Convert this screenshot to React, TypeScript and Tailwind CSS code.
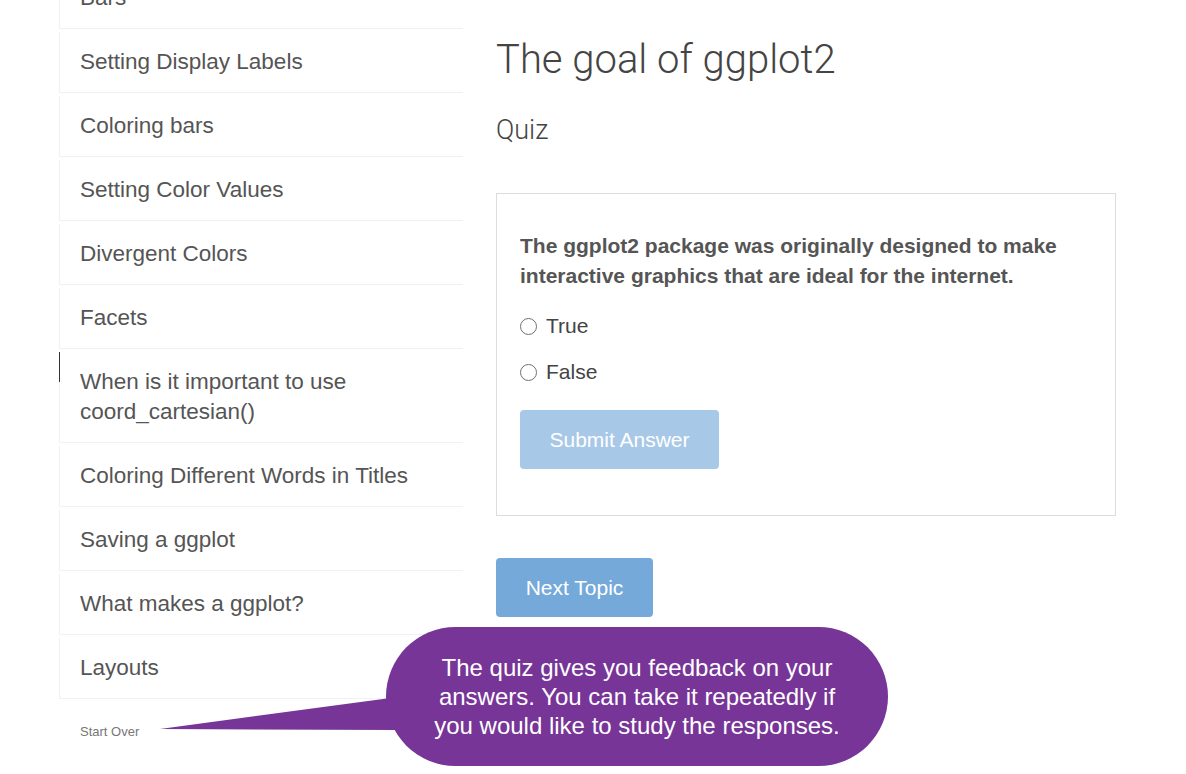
import React from "react";

const topics = [
  "Bars",
  "Setting Display Labels",
  "Coloring bars",
  "Setting Color Values",
  "Divergent Colors",
  "Facets",
  "When is it important to use coord_cartesian()",
  "Coloring Different Words in Titles",
  "Saving a ggplot",
  "What makes a ggplot?",
  "Layouts",
];

function Sidebar() {
  return (
    <nav className="w-[404px] shrink-0 mt-[-35px]">
      {topics.map((t) => (
        <div
          key={t}
          className="relative mt-[3px] border-l border-b border-[#f1f1f1] pl-[20px] pr-[24px] py-[15px] text-[22.5px] leading-[30px] text-[#555]"
        >
          {t.startsWith("When") && (
            <span className="absolute left-[-1px] top-0 h-[30px] w-px bg-[#333]" />
          )}
          {t}
        </div>
      ))}
      <div className="mt-[23px] pl-[21px] text-[13px] text-[#777]">Start Over</div>
    </nav>
  );
}

function Quiz() {
  return (
    <div className="mt-[47px] border border-[#dcdcdc] px-[23px] pt-[37px] pb-[46px]">
      <p className="text-[21px] font-bold leading-[30px] text-[#555]">
        The ggplot2 package was originally designed to make interactive graphics that are ideal for the internet.
      </p>
      <div className="mt-[19px] flex flex-col gap-[14px]">
        {["True", "False"].map((o) => (
          <label key={o} className="flex items-center gap-[9px] text-[21px] leading-[32px] text-[#444]">
            <span className="h-[17px] w-[17px] rounded-full border border-[#6f6f6f] bg-white" />
            {o}
          </label>
        ))}
      </div>
      <button className="mt-[22px] h-[59px] w-[199px] rounded-[4px] bg-[#a8c8e8] text-[21px] text-white">
        Submit Answer
      </button>
    </div>
  );
}

function Bubble() {
  return (
    <>
      <svg className="absolute left-[158px] top-[690px]" width="260" height="45" viewBox="0 0 260 45">
        <polygon points="2,39 240,7 240,40" fill="#773597" />
      </svg>
      <div className="absolute left-[386px] top-[627px] flex h-[139px] w-[502px] items-center justify-center rounded-full bg-[#773597] text-center text-[24px] leading-[29px] text-white">
        <p>
          The quiz gives you feedback on your
          <br />
          answers. You can take it repeatedly if
          <br />
          you would like to study the responses.
        </p>
      </div>
    </>
  );
}

export default function App() {
  return (
    <div
      className="relative h-[774px] w-[1186px] overflow-hidden bg-white"
      style={{ fontFamily: '"Liberation Sans", Arial, sans-serif' }}
    >
      <div className="flex pl-[59px]">
        <Sidebar />
        <main className="ml-[33px] w-[620px] pt-[34px]">
          <h1 className="font-['Roboto',sans-serif] text-[40px] font-light leading-[52px] text-[#444]">
            The goal of ggplot2
          </h1>
          <h3 className="mt-[28px] font-['Roboto',sans-serif] text-[27px] font-light leading-[32px] text-[#444]">
            Quiz
          </h3>
          <Quiz />
          <button className="mt-[42px] h-[59px] w-[157px] rounded-[4px] bg-[#75a9da] text-[21px] text-white">
            Next Topic
          </button>
        </main>
      </div>
      <Bubble />
    </div>
  );
}
